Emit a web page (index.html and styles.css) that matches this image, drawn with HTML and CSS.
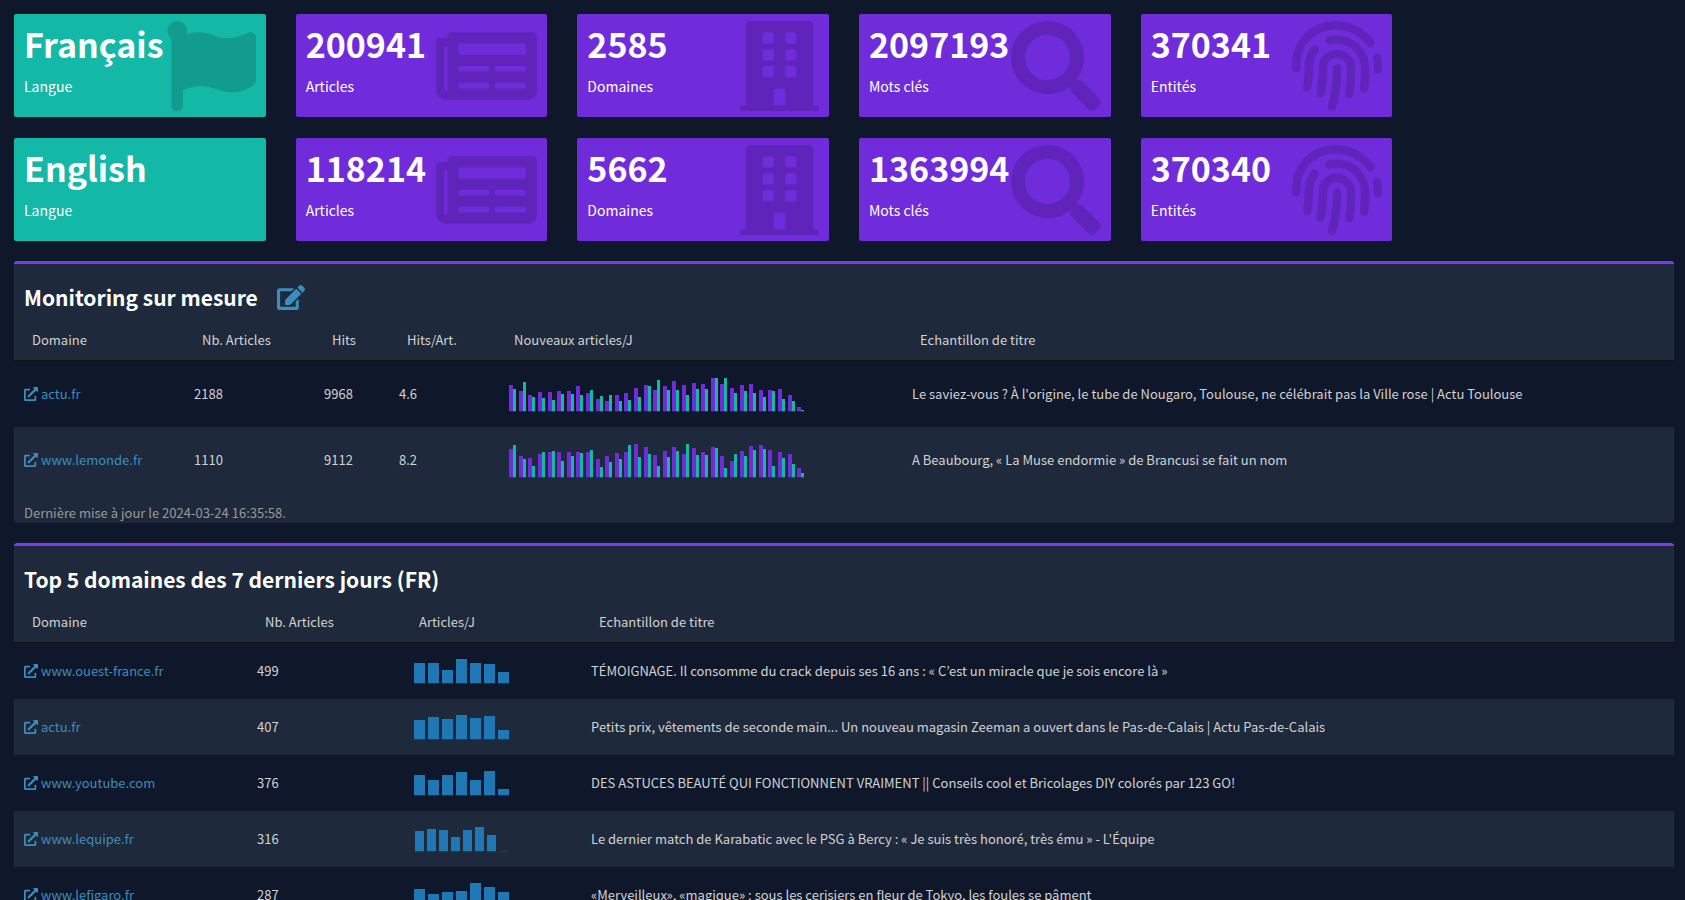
FILE: index.html
```
<!DOCTYPE html>
<html lang="fr">
<head>
<meta charset="utf-8">
<title>Monitoring</title>
<link rel="stylesheet" href="styles.css">
</head>
<body>
<svg class="sprite" aria-hidden="true">
  <symbol id="flag" viewBox="0 0 512 512"><path d="M349.565 98.783C295.978 98.783 251.721 64 184.348 64c-24.955 0-47.309 4.384-68.045 12.013a55.947 55.947 0 0 0 3.586-23.562C118.117 24.015 94.806 1.206 66.338.048 34.345-1.254 8 24.296 8 56c0 19.026 9.497 35.825 24 45.945V488c0 13.255 10.745 24 24 24h16c13.255 0 24-10.745 24-24v-94.4c28.311-12.064 63.582-22.122 114.435-22.122 53.588 0 97.844 34.783 165.217 34.783 48.169 0 86.667-16.294 122.505-40.858C506.84 359.452 512 349.571 512 339.045v-243.1c0-23.393-24.269-38.87-45.485-29.016-34.338 15.948-76.454 31.854-116.95 31.854z"/></symbol>
  <symbol id="news" viewBox="0 0 576 512"><path d="M552 64H88c-13.255 0-24 10.745-24 24v8H24c-13.255 0-24 10.745-24 24v272c0 30.928 25.072 56 56 56h472c26.51 0 48-21.49 48-48V88c0-13.255-10.745-24-24-24zM56 400a8 8 0 0 1-8-8V144h16v248a8 8 0 0 1-8 8zm236-16H140c-6.627 0-12-5.373-12-12v-8c0-6.627 5.373-12 12-12h152c6.627 0 12 5.373 12 12v8c0 6.627-5.373 12-12 12zm208 0H348c-6.627 0-12-5.373-12-12v-8c0-6.627 5.373-12 12-12h152c6.627 0 12 5.373 12 12v8c0 6.627-5.373 12-12 12zm-208-96H140c-6.627 0-12-5.373-12-12v-8c0-6.627 5.373-12 12-12h152c6.627 0 12 5.373 12 12v8c0 6.627-5.373 12-12 12zm208 0H348c-6.627 0-12-5.373-12-12v-8c0-6.627 5.373-12 12-12h152c6.627 0 12 5.373 12 12v8c0 6.627-5.373 12-12 12zm0-96H140c-6.627 0-12-5.373-12-12v-40c0-6.627 5.373-12 12-12h360c6.627 0 12 5.373 12 12v40c0 6.627-5.373 12-12 12z"/></symbol>
  <symbol id="building" viewBox="0 0 448 512"><path d="M436 480h-20V24c0-13.255-10.745-24-24-24H56C42.745 0 32 10.745 32 24v456H12c-6.627 0-12 5.373-12 12v20h448v-20c0-6.627-5.373-12-12-12zM128 76c0-6.627 5.373-12 12-12h40c6.627 0 12 5.373 12 12v40c0 6.627-5.373 12-12 12h-40c-6.627 0-12-5.373-12-12V76zm0 96c0-6.627 5.373-12 12-12h40c6.627 0 12 5.373 12 12v40c0 6.627-5.373 12-12 12h-40c-6.627 0-12-5.373-12-12v-40zm52 148h-40c-6.627 0-12-5.373-12-12v-40c0-6.627 5.373-12 12-12h40c6.627 0 12 5.373 12 12v40c0 6.627-5.373 12-12 12zm76 160h-64v-84c0-6.627 5.373-12 12-12h40c6.627 0 12 5.373 12 12v84zm64-172c0 6.627-5.373 12-12 12h-40c-6.627 0-12-5.373-12-12v-40c0-6.627 5.373-12 12-12h40c6.627 0 12 5.373 12 12v40zm0-96c0 6.627-5.373 12-12 12h-40c-6.627 0-12-5.373-12-12v-40c0-6.627 5.373-12 12-12h40c6.627 0 12 5.373 12 12v40zm0-96c0 6.627-5.373 12-12 12h-40c-6.627 0-12-5.373-12-12V76c0-6.627 5.373-12 12-12h40c6.627 0 12 5.373 12 12v40z"/></symbol>
  <symbol id="search" viewBox="0 0 512 512"><path d="M505 442.700L405.300 343c-4.500-4.500-10.600-7-17-7H372c27.600-35.300 44-79.700 44-128C416 93.100 322.900 0 208 0S0 93.100 0 208s93.100 208 208 208c48.300 0 92.700-16.400 128-44v16.300c0 6.400 2.500 12.500 7 17l99.700 99.700c9.400 9.400 24.600 9.400 33.900 0l28.300-28.300c9.400-9.400 9.400-24.600.1-34zM208 336c-70.700 0-128-57.200-128-128 0-70.700 57.200-128 128-128 70.700 0 128 57.200 128 128 0 70.700-57.200 128-128 128z"/></symbol>
  <symbol id="finger" viewBox="0 0 512 512"><path d="M256.120 245.960c-13.250 0-24 10.740-24 24 1.140 72.250-8.140 141.900-27.700 211.550-2.730 9.720 2.150 30.490 23.120 30.490 10.480 0 20.110-6.920 23.090-17.520 13.530-47.910 31.040-125.410 29.480-224.520.01-13.250-10.730-24-23.990-24zm-.86-81.730C194 164.160 151.250 211.300 152.100 265.320c.75 47.940-3.750 95.910-13.370 142.550-2.690 12.980 5.670 25.690 18.640 28.360 13.050 2.670 25.670-5.660 28.360-18.640 10.340-50.090 15.170-101.580 14.370-153.020-.41-25.950 19.920-52.490 54.450-52.340 31.310.47 57.150 25.340 57.620 55.470.77 48.050-2.810 96.330-10.610 143.550-2.170 13.060 6.690 25.420 19.760 27.580 19.970 3.330 26.810-15.100 27.580-19.770 8.280-50.030 12.060-101.210 11.270-152.110-.88-55.800-47.940-101.880-104.910-102.720zm-110.690-19.780c-10.300-8.340-25.370-6.800-33.760 3.480-25.620 31.500-39.390 71.280-38.750 112 .59 37.580-2.470 75.270-9.110 112.050-2.340 13.050 6.310 25.530 19.360 27.890 20.110 3.500 27.070-14.810 27.890-19.360 7.190-39.840 10.500-80.660 9.860-121.330-.47-29.880 9.200-57.880 28-80.970 8.350-10.280 6.790-25.390-3.490-33.760zm109.470-62.330c-15.410-.41-30.870 1.440-45.780 4.970-12.890 3.060-20.870 15.980-17.830 28.890 3.060 12.890 16 20.830 28.890 17.830 11.050-2.610 22.470-3.770 34-3.690 75.430 1.130 137.730 61.500 138.880 134.580.59 37.880-1.280 76.110-5.580 113.630-1.500 13.170 7.950 25.080 21.110 26.580 16.720 1.950 25.510-11.880 26.580-21.110a929.060 929.060 0 0 0 5.890-119.850c-1.560-98.750-85.070-180.330-186.160-181.830zm252.070 121.450c-2.860-12.920-15.510-21.200-28.610-18.270-12.940 2.860-21.120 15.660-18.260 28.610 4.710 21.410 4.910 37.410 4.700 61.600-.11 13.270 10.550 24.090 23.800 24.200h.2c13.170 0 23.890-10.610 24-23.800.18-22.180.4-44.110-5.830-72.340zm-40.120-90.720C417.290 43.460 337.300 1.290 252.810.020 183.020-.820 118.470 24.910 70.460 72.940 24.090 119.370-.9 181.040.140 246.650l-.12 21.470c-.39 13.250 10.030 24.310 23.280 24.690.23.020.48.020.72.020 12.920 0 23.590-10.300 23.970-23.300l.16-23.640c-.83-52.500 19.160-101.860 56.280-139 38.760-38.800 91.340-59.670 147.680-58.860 69.450 1.030 134.730 35.560 174.620 92.390 7.610 10.860 22.560 13.450 33.420 5.860 10.840-7.620 13.460-22.590 5.840-33.430z"/></symbol>
  <symbol id="edit" viewBox="0 0 576 512"><path d="M402.600 83.200l90.200 90.200c3.800 3.800 3.800 10 0 13.800L274.400 405.600l-92.800 10.300c-12.400 1.400-22.900-9.100-21.500-21.500l10.300-92.800L388.800 83.200c3.800-3.800 10-3.800 13.800 0zm162-22.900l-48.800-48.800c-15.200-15.200-39.900-15.200-55.200 0l-35.400 35.400c-3.800 3.800-3.800 10 0 13.800l90.200 90.200c3.800 3.800 10 3.800 13.800 0l35.400-35.400c15.200-15.300 15.200-40 0-55.200zM384 346.200V448H64V128h229.800c3.200 0 6.200-1.300 8.500-3.500l40-40c7.600-7.600 2.200-20.500-8.500-20.500H48C21.500 64 0 85.500 0 112v352c0 26.500 21.500 48 48 48h352c26.500 0 48-21.500 48-48V306.200c0-10.700-12.900-16-20.500-8.500l-40 40c-2.200 2.300-3.500 5.300-3.500 8.500z"/></symbol>
  <symbol id="ext" viewBox="0 0 512 512"><path d="M432 320H400a16 16 0 0 0-16 16V448H64V128H208a16 16 0 0 0 16-16V80a16 16 0 0 0-16-16H48A48 48 0 0 0 0 112V464a48 48 0 0 0 48 48H400a48 48 0 0 0 48-48V336A16 16 0 0 0 432 320ZM488 0H360c-21.370 0-32.050 25.910-17 41L378.700 76.700 135 320.370a24 24 0 0 0 0 34L157.670 377a24 24 0 0 0 34 0L435.280 133.320 471 169c15 15 41 4.500 41-17V24A24 24 0 0 0 488 0Z"/></symbol>
</svg>

<main class="page">
  <section class="stats" aria-label="Statistiques">
    <div class="stat stat-lang"><strong class="value">Français</strong><span class="label">Langue</span><svg class="icon square"><use href="#flag"/></svg></div>
    <div class="stat"><strong class="value">200941</strong><span class="label">Articles</span><svg class="icon wide"><use href="#news"/></svg></div>
    <div class="stat"><strong class="value">2585</strong><span class="label">Domaines</span><svg class="icon narrow"><use href="#building"/></svg></div>
    <div class="stat"><strong class="value">2097193</strong><span class="label">Mots clés</span><svg class="icon square"><use href="#search"/></svg></div>
    <div class="stat"><strong class="value">370341</strong><span class="label">Entités</span><svg class="icon square"><use href="#finger"/></svg></div>
    <div class="stat stat-lang row-start"><strong class="value">English</strong><span class="label">Langue</span></div>
    <div class="stat"><strong class="value">118214</strong><span class="label">Articles</span><svg class="icon wide"><use href="#news"/></svg></div>
    <div class="stat"><strong class="value">5662</strong><span class="label">Domaines</span><svg class="icon narrow"><use href="#building"/></svg></div>
    <div class="stat"><strong class="value">1363994</strong><span class="label">Mots clés</span><svg class="icon square"><use href="#search"/></svg></div>
    <div class="stat"><strong class="value">370340</strong><span class="label">Entités</span><svg class="icon square"><use href="#finger"/></svg></div>
  </section>

  <section class="panel">
    <header class="panel-head">
      <h2>Monitoring sur mesure</h2>
      <a class="edit" href="#monitoring" aria-label="Modifier"><svg><use href="#edit"/></svg></a>
    </header>
    <table class="grid tall">
      <colgroup><col class="m-domain"><col class="m-articles"><col class="m-hits"><col class="m-ratio"><col class="m-chart"><col></colgroup>
      <thead><tr><th>Domaine</th><th>Nb. Articles</th><th>Hits</th><th>Hits/Art.</th><th>Nouveaux articles/J</th><th>Echantillon de titre</th></tr></thead>
      <tbody>
        <tr><td><a class="link" href="#actu"><svg><use href="#ext"/></svg>actu.fr</a></td><td>2188</td><td>9968</td><td>4.6</td>
          <td><svg class="chart pairs" data-a="26,20,16,19,19,20,20,25,18,12,10,16,18,23,26,21,25,30,26,28,27,33,27,23,26,27,21,21,22,16,4" data-b="22,29,14,13,11,17,17,16,21,15,16,10,11,14,25,31,21,21,16,22,22,33,33,18,20,18,14,20,12,10,1"></svg></td>
          <td>Le saviez-vous ? À l'origine, le tube de Nougaro, Toulouse, ne célébrait pas la Ville rose | Actu Toulouse</td></tr>
        <tr><td><a class="link" href="#lemonde"><svg><use href="#ext"/></svg>www.lemonde.fr</a></td><td>1110</td><td>9112</td><td>8.2</td>
          <td><svg class="chart pairs" data-a="28,21,19,23,25,25,25,25,25,18,21,24,25,33,30,22,26,30,23,29,25,30,21,16,26,31,32,27,25,23,9" data-b="32,18,11,25,26,16,21,24,27,10,15,18,32,20,23,11,20,26,33,22,22,29,9,23,21,27,28,11,19,13,4"></svg></td>
          <td>A Beaubourg, « La Muse endormie » de Brancusi se fait un nom</td></tr>
      </tbody>
    </table>
    <p class="updated">Dernière mise à jour le 2024-03-24 16:35:58.</p>
  </section>

  <section class="panel">
    <header class="panel-head"><h2>Top 5 domaines des 7 derniers jours (FR)</h2></header>
    <table class="grid">
      <colgroup><col class="t-domain"><col class="t-articles"><col class="t-chart"><col></colgroup>
      <thead><tr><th>Domaine</th><th>Nb. Articles</th><th>Articles/J</th><th>Echantillon de titre</th></tr></thead>
      <tbody>
        <tr><td><a class="link" href="#ouest"><svg><use href="#ext"/></svg>www.ouest-france.fr</a></td><td>499</td><td><svg class="chart week" data-a="20,20,13,24,20,19,11"></svg></td><td>TÉMOIGNAGE. Il consomme du crack depuis ses 16 ans : « C’est un miracle que je sois encore là »</td></tr>
        <tr><td><a class="link" href="#actu"><svg><use href="#ext"/></svg>actu.fr</a></td><td>407</td><td><svg class="chart week" data-a="19,22,20,24,21,23,9"></svg></td><td>Petits prix, vêtements de seconde main... Un nouveau magasin Zeeman a ouvert dans le Pas-de-Calais | Actu Pas-de-Calais</td></tr>
        <tr><td><a class="link" href="#youtube"><svg><use href="#ext"/></svg>www.youtube.com</a></td><td>376</td><td><svg class="chart week" data-a="20,15,20,23,15,24,6"></svg></td><td>DES ASTUCES BEAUTÉ QUI FONCTIONNENT VRAIMENT || Conseils cool et Bricolages DIY colorés par 123 GO!</td></tr>
        <tr><td><a class="link" href="#lequipe"><svg><use href="#ext"/></svg>www.lequipe.fr</a></td><td>316</td><td><svg class="chart week" data-a="20,22,21,14,21,24,16,0"></svg></td><td>Le dernier match de Karabatic avec le PSG à Bercy : « Je suis très honoré, très ému » - L'Équipe</td></tr>
        <tr><td><a class="link" href="#lefigaro"><svg><use href="#ext"/></svg>www.lefigaro.fr</a></td><td>287</td><td><svg class="chart week" data-a="18,13,15,16,24,20,15"></svg></td><td>«Merveilleux», «magique» : sous les cerisiers en fleur de Tokyo, les foules se pâment</td></tr>
      </tbody>
    </table>
  </section>
</main>
<script src="charts.js"></script>
</body>
</html>
```
FILE: styles.css
```
* { box-sizing: border-box; }
body {
  margin: 0;
  background: #0f172a;
  color: #d2d2d2;
  font: 13px/20px "Noto Sans CJK KR", "Noto Sans", sans-serif;
}
.sprite { position: absolute; width: 0; height: 0; }
svg { fill: currentColor; }
.page { padding: 14px 11px 0 14px; }
.stats {
  display: grid;
  grid-template-columns: repeat(6, 1fr);
  gap: 21px 30px;
  margin-bottom: 20px;
}
.stat {
  position: relative;
  display: flex;
  flex-direction: column;
  gap: 13px;
  padding: 11px 10px 21px;
  border-radius: 2px;
  background: #702cdb;
  color: #fff;
}
.stat-lang { background: #14b8a6; }
.row-start { grid-column: 1; }
.value { font-size: 34px; line-height: 38px; font-weight: 700; }
.label { font-size: 14px; line-height: 20px; }
.value, .label { position: relative; z-index: 1; }
.icon {
  position: absolute;
  top: 7px;
  right: 10px;
  height: 90px;
  color: rgba(0, 0, 0, 0.15);
}
.square { width: 90px; }
.wide { width: 101px; }
.narrow { width: 79px; }
.panel {
  margin-bottom: 20px;
  border-top: 3px solid #7c3aed;
  border-radius: 3px;
  background: #1e293b;
}
.panel-head {
  display: flex;
  align-items: center;
  gap: 19px;
  padding: 12px 10px 2px;
}
h2 { margin: 0; color: #fff; font-size: 21px; line-height: 42px; font-weight: 700; }
.edit { display: flex; color: #3c8dbc; }
.edit svg { width: 28px; height: 25px; }
.grid { width: 100%; table-layout: fixed; border-collapse: separate; border-spacing: 0; }
.grid th {
  height: 41px;
  padding: 0 18px;
  border-bottom: 1px solid #111;
  font-weight: 400;
  text-align: left;
  white-space: nowrap;
}
.grid td { height: 56px; padding: 0 10px; }
.tall td { height: 66px; }
.grid tbody tr:nth-child(odd) { background: #0f172a; }
.m-domain { width: 170px; }
.m-articles { width: 130px; }
.m-hits { width: 75px; }
.m-ratio { width: 107px; }
.m-chart { width: 406px; }
.t-domain { width: 233px; }
.t-articles { width: 154px; }
.t-chart { width: 180px; }
.link { display: flex; align-items: center; gap: 3px; color: #3c8dbc; text-decoration: none; }
.link svg { width: 14px; height: 14px; }
.chart { display: block; margin-left: 3px; }
.pairs { margin-top: 2px; }
.updated { margin: 0; padding: 10px 10px 0; color: #999; }
```
FILE: charts.js
```
const NS = "http://www.w3.org/2000/svg";

function bar(svg, x, width, height, color, base) {
  const add = (y, h, opacity) => {
    const r = document.createElementNS(NS, "rect");
    r.setAttribute("x", x);
    r.setAttribute("y", y);
    r.setAttribute("width", width);
    r.setAttribute("height", h);
    r.setAttribute("fill", color);
    r.setAttribute("fill-opacity", opacity);
    svg.appendChild(r);
  };
  if (height > 0) add(base - height, height, 1);
  add(base, 1, 0.3);
}

document.querySelectorAll(".chart").forEach((svg) => {
  const a = svg.dataset.a.split(",").map(Number);
  if (svg.dataset.b) {
    const b = svg.dataset.b.split(",").map(Number);
    svg.setAttribute("width", 296);
    svg.setAttribute("height", 34);
    a.forEach((v, i) => {
      const x = Math.floor((i * 48 + 3) / 5);
      bar(svg, x, 4, v, "#702cdb", 33);
      bar(svg, x + 4, 3, b[i], "#14b8a6", 33);
    });
  } else {
    const week = a.length === 7;
    svg.setAttribute("width", 98);
    svg.setAttribute("height", 25);
    a.forEach((v, i) => {
      bar(svg, week ? i * 14 : 1 + i * 12, week ? 11 : 9, v, "#1f77b4", 24);
    });
  }
});
```
